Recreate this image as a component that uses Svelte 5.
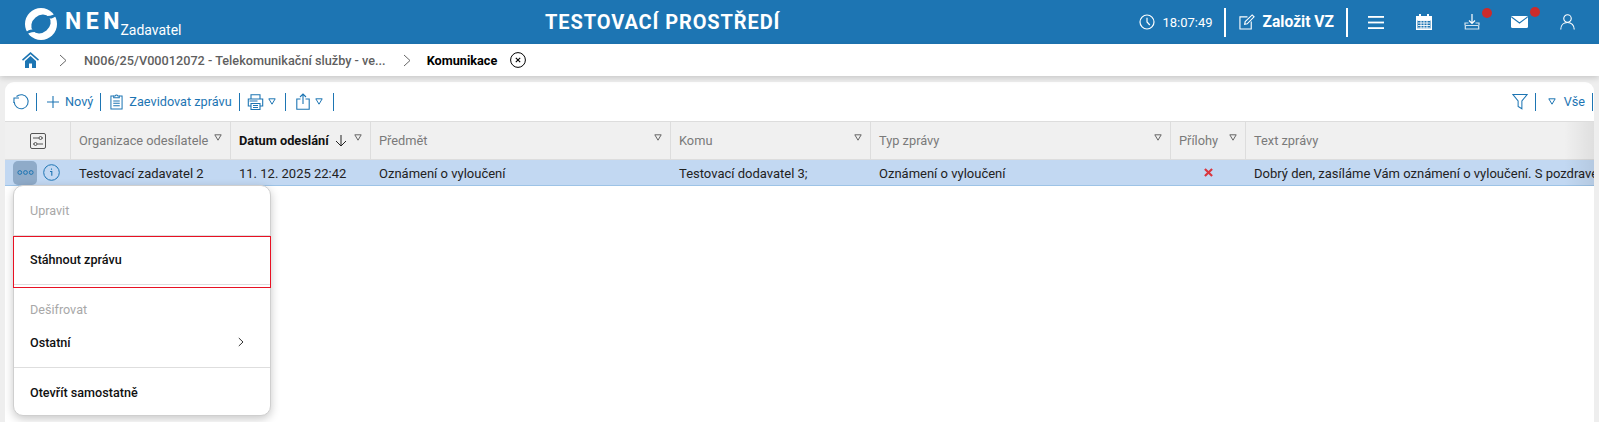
<script>
  const columns = [
    { label: 'Organizace odesílatele', width: 160, value: 'Testovací zadavatel 2' },
    { label: 'Datum odeslání', width: 140, value: '11. 12. 2025 22:42', sorted: true },
    { label: 'Předmět', width: 300, value: 'Oznámení o vyloučení' },
    { label: 'Komu', width: 200, value: 'Testovací dodavatel 3;' },
    { label: 'Typ zprávy', width: 300, value: 'Oznámení o vyloučení' },
    { label: 'Přílohy', width: 75, cross: true },
    { label: 'Text zprávy', width: 500, noFilter: true, value: 'Dobrý den, zasíláme Vám oznámení o vyloučení. S pozdravem' }
  ];
</script>

{#snippet tri()}
  <svg class="tri" width="8" height="7" viewBox="0 0 8 7"><path d="M.8.8h6.400L4 6.200z" fill="none" stroke="currentColor" stroke-width="1" stroke-linejoin="round" /></svg>
{/snippet}

<div class="page">
  <header class="top">
    <div class="brand">
      <svg class="logo" width="32" height="32" viewBox="0 0 32 32">
        <circle cx="16" cy="16" r="16" fill="#fff" />
        <ellipse cx="16" cy="16" rx="10.500" ry="8.500" transform="rotate(-40 16 16)" fill="#1d75b3" />
        <path d="M21 8C25 8.500 29 7 32 4L32 7C29 10 26 11 24 10.500z" fill="#1d75b3" />
        <path d="M11 24C7 23.500 3 25 0 28L0 25C3 22 6 21 8 21.500z" fill="#1d75b3" />
      </svg>
      <span class="nen">NEN</span>
      <span class="role">Zadavatel</span>
    </div>
    <div class="env">TESTOVACÍ PROSTŘEDÍ</div>
    <div class="tools">
      <svg width="16" height="16" viewBox="0 0 16 16" fill="none" stroke="#fff" stroke-width="1.200"><circle cx="8" cy="8" r="7" /><path d="M8 3.800V8l2.800 3" /></svg>
      <span class="clock">18:07:49</span>
      <i class="sep"></i>
      <svg class="edit" width="16" height="16" viewBox="0 0 17 17" fill="none" stroke="#fff" stroke-width="1.200"><path d="M9 3H1v13h12V8" /><path d="M6 11l.6-3L14 1l2 2-7.300 7.400z" /></svg>
      <span class="create">Založit VZ</span>
      <i class="sep last-sep"></i>
      <span class="ico first">
        <svg width="16" height="13" viewBox="0 0 16 13" fill="#fff"><rect y="0" width="16" height="1.800" /><rect y="5.600" width="16" height="1.800" /><rect y="11.200" width="16" height="1.800" /></svg>
      </span>
      <span class="ico">
        <svg width="16" height="16" viewBox="0 0 16 16"><path d="M3 0h2v2h6V0h2v2h3v14H0V2h3z" fill="#fff" /><path d="M1.500 6.500h13v8h-13z" fill="#1d75b3" /><path d="M2 6.500h12M2 9h12M2 11.500h12M2 14h12M5 6.500v8M8 6.500v8M11 6.500v8" stroke="#fff" stroke-width=".9" /></svg>
      </span>
      <span class="ico dl">
        <svg width="16" height="16" viewBox="0 0 16 16" fill="none" stroke="#fff" stroke-width="1.200"><path d="M8 0v9.500M5 6.500l3 3 3-3" /><path d="M4.500 9H1v2.500M11.500 9H15v2.500" opacity=".8" /><path d="M2.300 11.500h11.400a1 1 0 0 1 1 1V15H1.300v-2.500a1 1 0 0 1 1-1z" opacity=".8" /></svg>
        <b class="dot"></b>
      </span>
      <span class="ico mail">
        <svg width="17" height="12" viewBox="0 0 17 12"><rect width="17" height="12" rx="1.500" fill="#fff" /><path d="M.5 1l8 6 8-6" fill="none" stroke="#1d75b3" stroke-width="1.100" /></svg>
        <b class="dot"></b>
      </span>
      <span class="ico">
        <svg width="15" height="16" viewBox="0 0 16 17" fill="none" stroke="#fff" stroke-width="1.200"><circle cx="8" cy="4.800" r="4" /><path d="M.8 16.500c0-4.500 3-7.500 7.200-7.500s7.200 3 7.200 7.500" /></svg>
      </span>
    </div>
  </header>

  <nav class="crumbs">
    <svg class="home" width="17" height="16" viewBox="0 0 17 16"><path d="M8.500 0L0 7.500l1 1.200L8.500 2.200 16 8.700l1-1.200z" fill="#1d75b3" /><path d="M3 9l5.500-5L14 9v7h-4v-4.500H7V16H3z" fill="#1d75b3" /></svg>
    <svg class="chev" width="8" height="13" viewBox="0 0 8 13"><path d="M1 1l6 5.500L1 12" fill="none" stroke="#666" stroke-width="1" /></svg>
    <span class="crumb">N006/25/V00012072 - Telekomunikační služby - ve...</span>
    <svg class="chev" width="8" height="13" viewBox="0 0 8 13"><path d="M1 1l6 5.500L1 12" fill="none" stroke="#666" stroke-width="1" /></svg>
    <span class="current">Komunikace</span>
    <svg width="16" height="16" viewBox="0 0 16 16" fill="none" stroke="#000"><circle cx="8" cy="8" r="7.400" stroke-width="1" /><path d="M5.800 5.800l4.400 4.400M10.200 5.800l-4.400 4.400" stroke-width="1.100" /></svg>
  </nav>

  <main class="card">
    <div class="toolbar">
      <svg width="17" height="17" viewBox="0 0 17 17" fill="none" stroke="#1d75b3" stroke-width="1.100"><path d="M3.500 3.500A7 7 0 1 1 1.200 9" /><path d="M.9 10L1 5h5" /></svg>
      <i class="bar refresh-bar"></i>
      <span class="btn"><svg width="12" height="12" viewBox="0 0 12 12"><path d="M6 0v12M0 6h12" stroke="#1d75b3" stroke-width="1.100" /></svg>Nový</span>
      <i class="bar"></i>
      <span class="btn note"><svg width="13" height="17" viewBox="0 0 14 17" fill="none" stroke="#1d75b3" stroke-width="1.100"><path d="M4 2.500H1v14h12v-14h-3" /><path d="M4 4.500V2.500h1.600a1.500 1.500 0 0 1 2.800 0H10v2zM3.500 8h7M3.500 10.500h7M3.500 13h7" /></svg>Zaevidovat zprávu</span>
      <i class="bar"></i>
      <span class="btn print"><svg width="17" height="16" viewBox="0 0 16 16" fill="none" stroke="#1d75b3" stroke-width="1.100"><path d="M3.500 5V.8h9V5M3.500 12H.8V5h14.400v7h-2.700" /><path d="M3.500 9.500h9v6h-9zM5.500 11.500h5M5.500 13.500h5M2 7h8" /></svg>{@render tri()}</span>
      <i class="bar"></i>
      <span class="btn export"><svg width="14" height="17" viewBox="0 0 14 17" fill="none" stroke="#1d75b3" stroke-width="1.100"><path d="M4.500 6H.8v10.200h12.400V6H9.500" /><path d="M7 11V1M4 4l3-3 3 3" /></svg>{@render tri()}</span>
      <i class="bar"></i>
      <div class="right">
        <svg width="16" height="17" viewBox="0 0 17 17" fill="none" stroke="#1d75b3" stroke-width="1.100"><path d="M.8 1h15.400L10.500 8v8.200l-4-2.500V8z" /></svg>
        <i class="bar"></i>
        <span class="btn all">{@render tri()}Vše</span>
        <i class="bar"></i>
      </div>
    </div>

    <div class="table">
      <div class="row head">
        <div class="cell cfg">
          <svg width="16" height="16" viewBox="0 0 16 16" fill="none" stroke="#555" stroke-width="1"><rect x=".5" y=".5" width="15" height="15" rx="1.500" /><path d="M3 5h6M12 5h1M3 11h1M7 11h6" /><circle cx="10.500" cy="5" r="1.500" /><circle cx="5.500" cy="11" r="1.500" /></svg>
        </div>
        {#each columns as col}
          <div class="cell" class:sorted={col.sorted} style="width: {col.width}px">
            <span>{col.label}</span>
            {#if col.sorted}
              <svg class="arrow" width="12" height="12" viewBox="0 0 12 12" fill="none" stroke="#222" stroke-width="1"><path d="M6 0v11M1 6l5 5 5-5" /></svg>
            {/if}
            {#if !col.noFilter}
              <span class="filter">{@render tri()}</span>
            {/if}
          </div>
        {/each}
      </div>
      <div class="row body">
        <div class="cell cfg actions">
          <span class="more"><svg width="17" height="5" viewBox="0 0 17 5" fill="none" stroke="#1d75b3" stroke-width="1"><circle cx="2.800" cy="2.500" r="1.900" /><circle cx="8.500" cy="2.500" r="1.900" /><circle cx="14.200" cy="2.500" r="1.900" /></svg></span>
          <svg class="info" width="17" height="17" viewBox="0 0 17 17" fill="none" stroke="#1d75b3"><circle cx="8.500" cy="8.500" r="7.800" stroke-width="1" /><path d="M7 7.500h1.800v4.300M8.500 4.500v1.300" stroke-width="1.100" /></svg>
        </div>
        {#each columns as col}
          <div class="cell" class:center={col.cross} style="width: {col.width}px">
            {#if col.cross}
              <svg width="9" height="9" viewBox="0 0 10 10"><path d="M1 1l8 8M9 1l-8 8" stroke="#d9363e" stroke-width="2.400" /></svg>
            {:else}
              {col.value}
            {/if}
          </div>
        {/each}
      </div>
    </div>
    <div class="edge"></div>

    <div class="popup">
      <div class="item disabled first-item">Upravit</div>
      <div class="item selected">Stáhnout zprávu</div>
      <div class="item disabled decrypt">Dešifrovat</div>
      <div class="item other">Ostatní
        <svg width="6" height="10" viewBox="0 0 6 10"><path d="M.8 1L5 5 .8 9" fill="none" stroke="#333" stroke-width="1" /></svg>
      </div>
      <div class="item last">Otevřít samostatně</div>
    </div>
  </main>
</div>

<style>
  :global(body) {
    background: #eeeeee;
    font-family: Roboto, "Liberation Sans", sans-serif;
    overflow: hidden;
  }

  .page {
    height: 422px;
    display: flex;
    flex-direction: column;
    overflow: hidden;
  }

  .top {
    height: 44px;
    flex: none;
    background: #1d75b3;
    color: #fff;
    display: flex;
    align-items: center;
    position: relative;
  }

  .brand {
    display: flex;
    align-items: center;
    padding-left: 25px;
    height: 44px;
  }

  .logo {
    overflow: hidden;
    margin-top: 3px;
  }

  .nen {
    font-size: 23px;
    font-weight: 700;
    letter-spacing: 4.500px;
    margin-left: 8px;
    margin-top: -1px;
  }

  .role {
    font-size: 14px;
    margin-left: -3.500px;
    margin-top: 15px;
  }

  .env {
    position: absolute;
    left: 545px;
    top: 11px;
    font-size: 20px;
    font-weight: 700;
    letter-spacing: 0.900px;
    line-height: 22px;
  }

  .tools {
    margin-left: auto;
    display: flex;
    align-items: center;
    padding-right: 24px;
  }

  .clock {
    font-size: 13px;
    margin-left: 7px;
  }

  .sep {
    width: 2px;
    height: 29px;
    background: #fff;
    margin: 0 13px 0 11px;
  }

  .last-sep {
    margin-left: 12px;
    margin-right: 20px;
  }

  .create {
    font-size: 15.600px;
    font-weight: 700;
    margin-left: 8px;
  }

  .ico {
    position: relative;
    display: flex;
    margin-left: 32px;
  }

  .ico.first {
    margin-left: 0;
  }

  .ico.mail {
    margin-left: 31px;
  }

  .dot {
    position: absolute;
    width: 10px;
    height: 10px;
    border-radius: 50%;
    background: #cc2b2b;
    right: -12px;
    top: -6px;
  }

  .mail .dot {
    top: -9px;
    right: -12px;
  }

  .crumbs {
    height: 32px;
    flex: none;
    background: #fff;
    box-shadow: 0 2px 6px rgba(0, 0, 0, 0.16);
    display: flex;
    align-items: center;
    padding-left: 22px;
    font-size: 12.700px;
    font-weight: 500;
    position: relative;
    z-index: 1;
  }

  .chev {
    margin-left: 20px;
    margin-right: 17px;
  }

  .crumb {
    color: #5f5f5f;
    white-space: nowrap;
  }

  .crumb + .chev {
    margin-left: 17px;
    margin-right: 16px;
  }

  .current {
    color: #000;
    font-weight: 700;
    margin-right: 13px;
  }

  .card {
    margin: 6px 5px 0;
    flex: 1;
    background: #fff;
    border-radius: 9px 9px 0 0;
    position: relative;
    overflow: hidden;
  }

  .toolbar {
    height: 39px;
    display: flex;
    align-items: center;
    padding-left: 8px;
    color: #1d75b3;
    font-size: 12.700px;
  }

  .bar {
    width: 1px;
    height: 18px;
    background: #1d75b3;
    margin: 0 10px 0 7px;
    flex: none;
  }

  .refresh-bar {
    margin-left: 6px;
  }

  .btn {
    display: flex;
    align-items: center;
    gap: 6px;
  }

  .note {
    margin-left: -1px;
  }

  .print {
    gap: 4px;
    margin-left: -3px;
    margin-right: 2px;
  }

  .export {
    gap: 5px;
    margin-right: 3px;
  }

  .right {
    margin-left: auto;
    display: flex;
    align-items: center;
    padding-right: 1px;
  }

  .right .bar {
    margin: 0 0 0 7px;
  }

  .all {
    margin-left: 12px;
    gap: 8px;
  }

  .tri {
    display: block;
  }

  .table {
    width: 1800px;
    font-size: 13px;
  }

  .row {
    display: flex;
  }

  .cell {
    flex: none;
    display: flex;
    align-items: center;
    padding-left: 8px;
    white-space: nowrap;
    box-sizing: border-box;
  }

  .cfg {
    width: 66px;
    justify-content: center;
    padding: 0;
  }

  .head {
    height: 39px;
    background: #f0f0f0;
    border-top: 1px solid #dddddd;
    border-bottom: 1px solid #dddddd;
    box-sizing: border-box;
    color: #7a7a7a;
    font-size: 12.800px;
  }

  .head .cell {
    border-right: 1px solid #dddddd;
    position: relative;
  }

  .head .cell.sorted {
    color: #111;
    font-weight: 700;
  }

  .arrow {
    margin-left: 6px;
  }

  .filter {
    position: absolute;
    right: 8px;
    top: 12px;
    color: #666;
  }

  .body {
    height: 26px;
    background: #c2d8f2;
    border-bottom: 1px solid #9dc3e6;
    box-sizing: border-box;
    color: #222;
  }

  .body .cell {
    padding-top: 2px;
  }

  .body .center {
    justify-content: center;
    padding: 0 0 1px;
  }

  .body .actions {
    justify-content: flex-start;
    padding: 0 0 0 8px;
  }

  .more {
    width: 24px;
    height: 24px;
    border-radius: 5px;
    background: #8fabc9;
    display: flex;
    align-items: center;
    justify-content: center;
    margin-right: 6px;
    flex: none;
  }

  .edge {
    position: absolute;
    right: 0;
    top: 40px;
    width: 30px;
    height: 64px;
    background: linear-gradient(to right, rgba(0, 0, 0, 0), rgba(0, 0, 0, 0.07));
  }

  .popup {
    position: absolute;
    left: 8px;
    top: 103px;
    width: 258px;
    height: 231px;
    box-sizing: border-box;
    background: #fff;
    border: 1px solid #cfcfcf;
    border-radius: 10px;
    box-shadow: 0 3px 10px rgba(0, 0, 0, 0.22);
    font-size: 12.600px;
    font-weight: 500;
    color: #111;
    display: flex;
    flex-direction: column;
  }

  .item {
    display: flex;
    align-items: center;
    justify-content: space-between;
    padding: 0 26px 0 16px;
    flex: none;
    box-sizing: border-box;
  }

  .disabled {
    color: #a8a8a8;
    font-weight: 400;
  }

  .first-item {
    height: 50px;
    border-bottom: 1px solid #dedede;
  }

  .selected {
    height: 52px;
    outline: 1px solid #e81123;
    outline-offset: -1px;
    margin: 0 -1px;
    padding-left: 17px;
    padding-bottom: 6px;
    box-shadow: inset 0 -3px 0 #fff, inset 0 -4px 0 #dedede;
  }

  .decrypt {
    height: 34px;
    margin-top: 4px;
  }

  .other {
    height: 32px;
  }

  .last {
    border-top: 1px solid #dedede;
    margin-top: 9px;
    height: 49px;
  }
</style>
